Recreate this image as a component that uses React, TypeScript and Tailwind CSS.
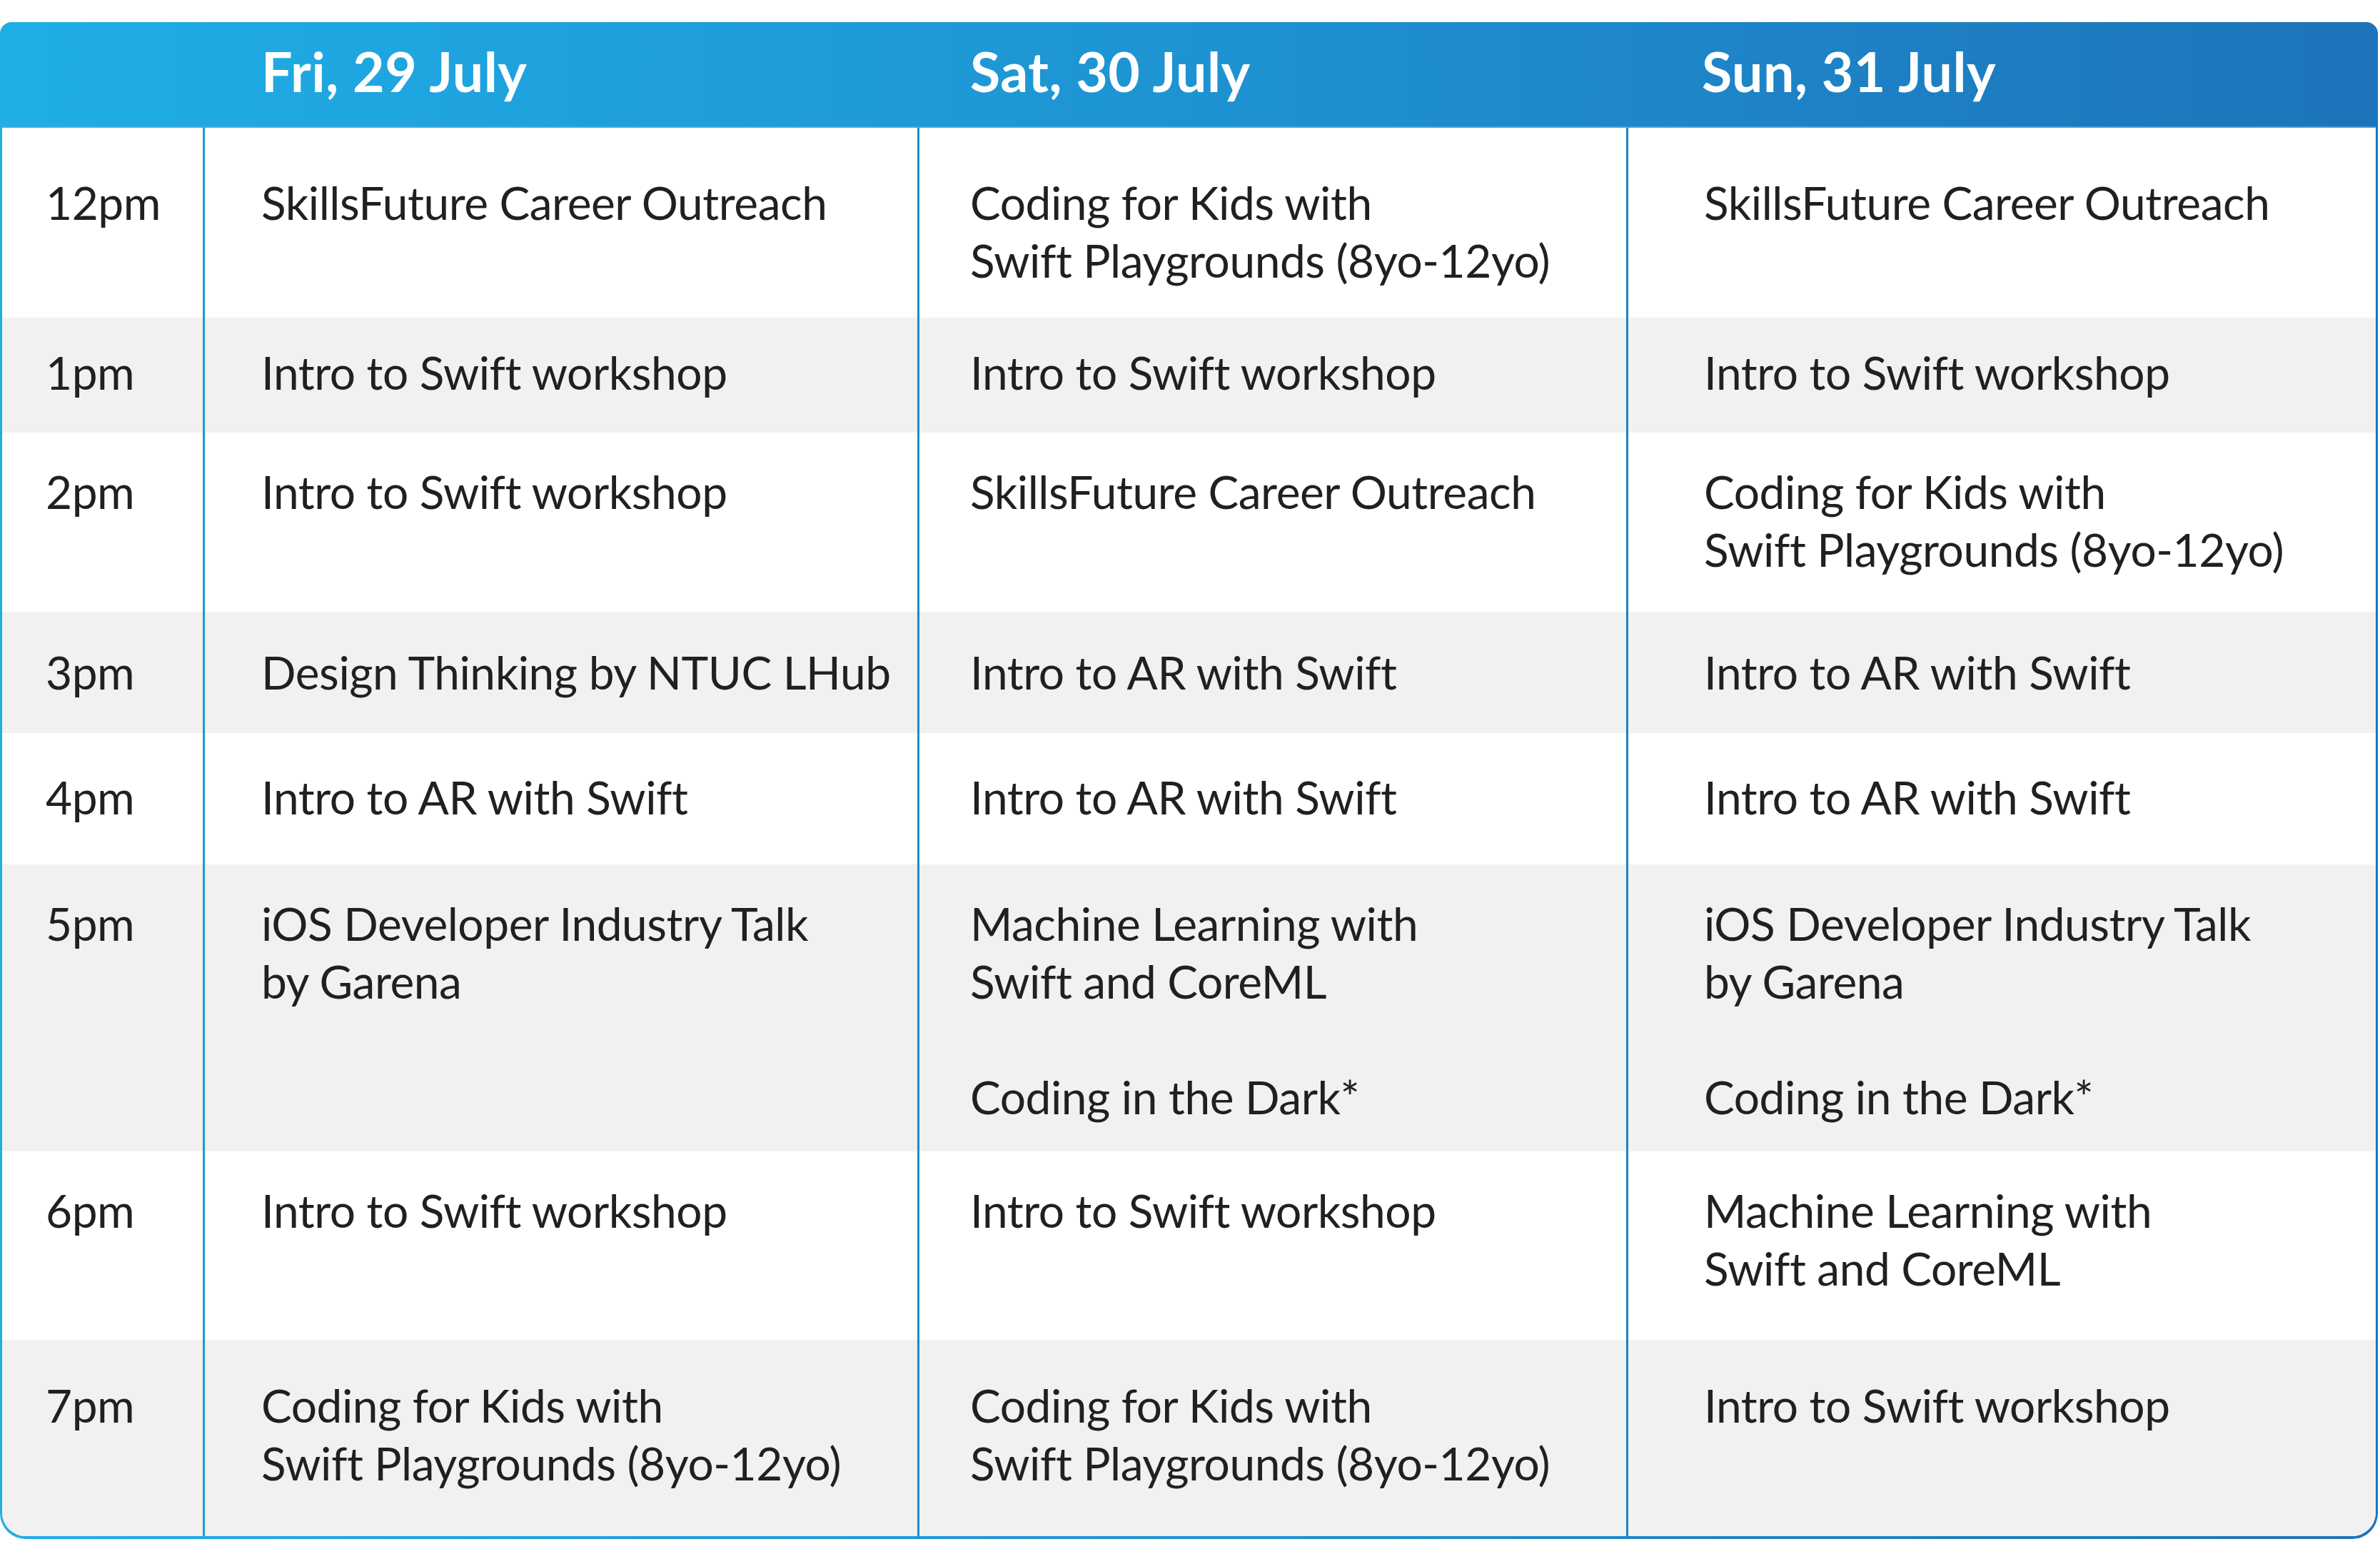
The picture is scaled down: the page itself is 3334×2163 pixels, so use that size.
const days = ["Fri, 29 July", "Sat, 30 July", "Sun, 31 July"]

type Row = {
  time: string
  pt: string
  h: string
  gray: boolean
  cells: string[][][]
}

const kids = ["Coding for Kids with", "Swift Playgrounds (8yo-12yo)"]
const ml = ["Machine Learning with", "Swift and CoreML"]
const ios = ["iOS Developer Industry Talk", "by Garena"]

const rows: Row[] = [
  {
    time: "12pm",
    pt: "pt-[64px]",
    h: "h-[266px]",
    gray: false,
    cells: [[["SkillsFuture Career Outreach"]], [kids], [["SkillsFuture Career Outreach"]]],
  },
  {
    time: "1pm",
    pt: "pt-[36px]",
    h: "h-[161px]",
    gray: true,
    cells: [[["Intro to Swift workshop"]], [["Intro to Swift workshop"]], [["Intro to Swift workshop"]]],
  },
  {
    time: "2pm",
    pt: "pt-[42px]",
    h: "h-[251px]",
    gray: false,
    cells: [[["Intro to Swift workshop"]], [["SkillsFuture Career Outreach"]], [kids]],
  },
  {
    time: "3pm",
    pt: "pt-[44px]",
    h: "h-[170px]",
    gray: true,
    cells: [[["Design Thinking by NTUC LHub"]], [["Intro to AR with Swift"]], [["Intro to AR with Swift"]]],
  },
  {
    time: "4pm",
    pt: "pt-[49px]",
    h: "h-[184px]",
    gray: false,
    cells: [[["Intro to AR with Swift"]], [["Intro to AR with Swift"]], [["Intro to AR with Swift"]]],
  },
  {
    time: "5pm",
    pt: "pt-[42px]",
    h: "h-[402px]",
    gray: true,
    cells: [[ios], [ml, ["Coding in the Dark*"]], [ios, ["Coding in the Dark*"]]],
  },
  {
    time: "6pm",
    pt: "pt-[42px]",
    h: "h-[264px]",
    gray: false,
    cells: [[["Intro to Swift workshop"]], [["Intro to Swift workshop"]], [ml]],
  },
  {
    time: "7pm",
    pt: "pt-[51px]",
    h: "h-[275px]",
    gray: true,
    cells: [[kids], [kids], [["Intro to Swift workshop"]]],
  },
]

const colClass = [
  "w-[1001px] pl-[79px] border-l-[3px] border-[#1e9bd7]",
  "w-[993px] pl-[71px] border-l-[3px] border-[#1e8ccd]",
  "w-[1050px] pl-[106px] border-l-[3px] border-[#1d80c4]",
]

const headClass = ["w-[1001px] pl-[82px]", "w-[993px] pl-[74px]", "w-[1050px] pl-[106px]"]

function Cell({ paras }: { paras: string[][] }) {
  return (
    <div className="flex flex-col gap-[81px]">
      {paras.map((lines, i) => (
        <div key={i}>
          {lines.map((l) => (
            <div key={l} className="whitespace-nowrap">
              {l}
            </div>
          ))}
        </div>
      ))}
    </div>
  )
}

export default function App() {
  return (
    <div className="min-h-screen bg-white pt-[31px]" style={{ fontFamily: "Lato, 'Open Sans', sans-serif" }}>
      <div className="w-[3331px] rounded-t-[16px] rounded-b-[36px] bg-gradient-to-r from-[#1faee6] via-[#1e93d2] to-[#1d73ba] px-[3px] pb-[4px]">
        <div className="flex h-[148px] border-b-[2px] border-[#4fb0e4]/70 text-white">
          <div className="w-[281px]" />
          {days.map((d, i) => (
            <div
              key={d}
              className={`${headClass[i]} pt-[30px] text-[77px] font-bold leading-[77px] tracking-[0.5px] whitespace-nowrap`}
            >
              {d}
            </div>
          ))}
        </div>
        <div className="overflow-hidden rounded-b-[33px] bg-white text-[64px] leading-[81px] tracking-[-0.45px] text-[#231f20]">
          {rows.map((r) => (
            <div key={r.time} className={`flex ${r.h} ${r.gray ? "bg-[#f1f1f1]" : "bg-white"}`}>
              <div className={`w-[281px] pl-[61px] ${r.pt}`}>{r.time}</div>
              {r.cells.map((c, i) => (
                <div key={i} className={`${colClass[i]} ${r.pt}`}>
                  <Cell paras={c} />
                </div>
              ))}
            </div>
          ))}
        </div>
      </div>
    </div>
  )
}
